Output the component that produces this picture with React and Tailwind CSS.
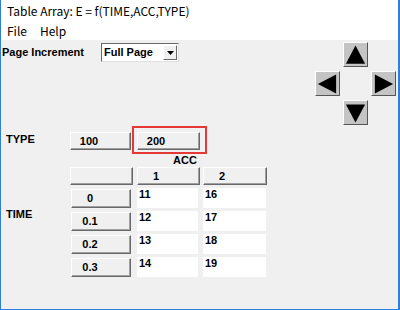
const btn =
  'flex items-center border border-t-white border-l-white border-b-[#696969] border-r-[#696969] shadow-[inset_-1px_-1px_0_#a0a0a0] bg-[#f0f0f0] text-black font-bold text-[11px]'

function Btn({ label, className = '' }) {
  return (
    <div className={`${btn} ${className}`}>
      <span className="w-[36px] text-center leading-none">{label}</span>
    </div>
  )
}

function Arrow({ dir }) {
  const pts = {
    up: '12,2 2,21 22,21',
    down: '2,3 22,3 12,22',
    left: '2,12 21,2 21,22',
    right: '3,2 22,12 3,22',
  }[dir]
  return (
    <div className="w-[25px] h-[25px] bg-[#c4c4c4] border border-t-white border-l-white border-b-[#555] border-r-[#555] flex items-center justify-center">
      <svg width="24" height="24" viewBox="0 0 24 24">
        <polygon points={pts} fill="#000" />
      </svg>
    </div>
  )
}

const rows = [
  ['0', '11', '16'],
  ['0.1', '12', '17'],
  ['0.2', '13', '18'],
  ['0.3', '14', '19'],
]

export default function App() {
  return (
    <div className="w-[400px] h-[310px] flex flex-col border-l border-r-2 border-b border-[#2f7fd6] bg-[#f0f0f0] font-['Liberation_Sans',sans-serif]">
      {/* title + menu */}
      <div className="h-[22px] bg-white flex items-center pl-[6px] text-[12px] text-black font-['Noto_Sans_CJK_SC','Noto_Sans',sans-serif]">
        Table Array: E = f(TIME,ACC,TYPE)
      </div>
      <div className="h-[18px] bg-white flex items-center gap-[13px] pl-[6px] text-[12px] text-black font-['Noto_Sans_CJK_SC','Noto_Sans',sans-serif]">
        <span>File</span>
        <span>Help</span>
      </div>

      <div className="flex-1 flex flex-col">
        {/* top row */}
        <div className="flex justify-between pt-[2px] pr-[2px]">
          <div className="flex items-start">
            <span className="pl-[1px] pt-[4px] text-[11px] font-bold text-black leading-[13px] w-[100px]">Page Increment</span>
            <div className="mt-[1px] w-[78px] h-[19px] bg-white border border-t-[#696969] border-l-[#696969] border-b-[#e0e0e0] border-r-[#e0e0e0] flex items-center justify-between pl-[2px]">
              <span className="text-[11px] font-bold text-black">Full Page</span>
              <div className="w-[14px] h-[15px] mr-[1px] bg-[#f0f0f0] border border-t-white border-l-white border-b-[#696969] border-r-[#696969] flex items-center justify-center">
                <svg width="7" height="4" viewBox="0 0 7 4"><polygon points="0,0 7,0 3.5,4" fill="#000" /></svg>
              </div>
            </div>
          </div>
          <div className="grid grid-cols-[25px_25px_25px] grid-rows-[25px_25px_25px] gap-x-[3px] gap-y-[4px]">
            <div />
            <Arrow dir="up" />
            <div />
            <Arrow dir="left" />
            <div />
            <Arrow dir="right" />
            <div />
            <Arrow dir="down" />
            <div />
          </div>
        </div>

        {/* table */}
        <div className="mt-[7px] pl-[5px] grid grid-cols-[60px_63px_63px_63px] gap-x-[4px] text-[11px] font-bold text-black">
          <span className="pt-[1px] leading-[13px]">TYPE</span>
          <Btn label="100" className="h-[18px] w-[61px]" />
          <div className="relative">
            <Btn label="200" className="h-[18px]" />
            <div className="absolute left-[-5px] top-[-6px] w-[75px] h-[28px] border-2 border-[#e53935]" />
          </div>
          <div />

          <div className="col-span-4 h-[17px] pl-[167px] pt-[5px] leading-[11px]">ACC</div>

          <div />
          <Btn label="" className="h-[18px]" />
          <Btn label="1" className="h-[18px]" />
          <Btn label="2" className="h-[18px] ml-[-1px]" />

          <div className="col-span-4 h-[3px]" />

          {rows.map(([t, a, b], i) => (
            <div key={t} className="contents">
              <span className="mt-[-3px] leading-[13px]">{i === 1 ? 'TIME' : ''}</span>
              <Btn label={t} className="h-[19px] mt-[1px] w-[60px] ml-[1px]" />
              <div className="h-[20px] bg-white pl-[2px] leading-[13px] mr-[2px]">{a}</div>
              <div className="h-[20px] bg-white pl-[2px] leading-[13px] ml-[-1px] mr-[1px]">{b}</div>
              <div className="col-span-4 h-[3px]" />
            </div>
          ))}
        </div>
      </div>
    </div>
  )
}
